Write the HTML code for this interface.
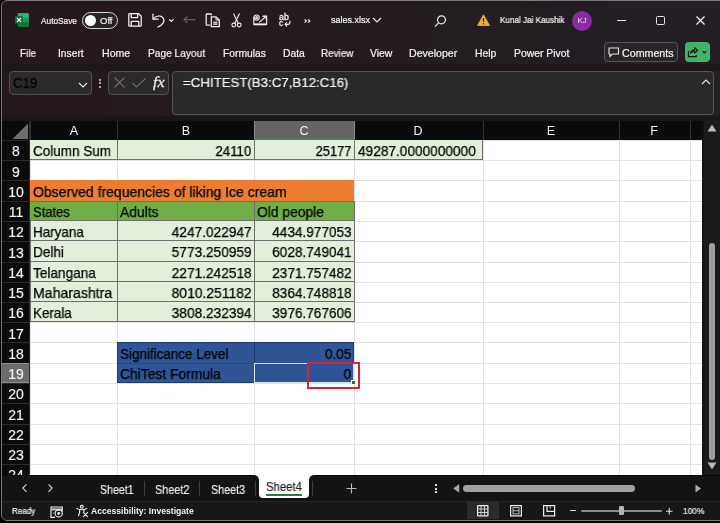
<!DOCTYPE html>
<html><head><meta charset="utf-8">
<style>
*{margin:0;padding:0;box-sizing:border-box}
html,body{width:720px;height:523px;overflow:hidden;background:#000;position:relative;font-family:"Liberation Sans",sans-serif}
.a{position:absolute}
.t{position:absolute;white-space:nowrap;line-height:1;will-change:transform}
svg{overflow:visible}
</style></head><body>

<div class="a" style="left:1px;top:0px;width:740px;height:520.8px;border:1.3px solid #7a7a7a;border-radius:6px;background:linear-gradient(90deg,#25181d 0%,#241b20 45%,#221f24 100%)"></div>
<svg class="a" style="left:14px;top:13px;" width="15" height="14" viewBox="0 0 15 14">
  <rect x="3.8" y="0.2" width="11" height="13.5" rx="1.2" fill="#1f9a5a"/>
  <rect x="3.8" y="0.2" width="11" height="4.5" rx="1" fill="#2fb474"/>
  <rect x="3.8" y="9.2" width="11" height="4.5" rx="1" fill="#13743f"/>
  <rect x="1" y="3" width="8" height="7.7" rx="1" fill="#0e6e38"/>
  <path d="M3 4.8 L7 9 M7 4.8 L3 9" stroke="#f4fff8" stroke-width="1.2"/></svg>
<div class="t" style="left:41px;top:16.77px;font-size:8.3px;color:#f0f0f0;font-weight:normal;font-family:'Liberation Sans';font-style:normal;transform:scaleX(1.0003);transform-origin:left top;-webkit-text-stroke:0.2px currentColor;">AutoSave</div>
<div class="a" style="left:82px;top:12px;width:36px;height:17px;border:1.3px solid #d8d8d8;border-radius:9px;background:#2a2326"></div>
<div class="a" style="left:85px;top:15px;width:11px;height:11px;border-radius:6px;background:#fff"></div>
<div class="t" style="left:100px;top:16.55px;font-size:8.8px;color:#f0f0f0;font-weight:normal;font-family:'Liberation Sans';font-style:normal;transform:scaleX(1.0798);transform-origin:left top;-webkit-text-stroke:0.2px currentColor;">Off</div>
<svg class="a" style="left:127.5px;top:13px;" width="14" height="14" viewBox="0 0 14 14"><g fill="none" stroke="#f2f2f2" stroke-width="1.25" stroke-linejoin="round"><path d="M0.8 1.5 Q0.8 0.7 1.6 0.7 H10.6 L13.2 3.3 V12.4 Q13.2 13.2 12.4 13.2 H1.6 Q0.8 13.2 0.8 12.4 Z"/><path d="M3.2 0.7 V4.6 H9.6 V0.7"/><path d="M3.2 13.2 V8.4 H10.8 V13.2"/></g></svg>
<svg class="a" style="left:151px;top:12.5px;" width="24" height="15" viewBox="0 0 24 15"><g fill="none" stroke="#f2f2f2" stroke-width="1.25" stroke-linecap="round" stroke-linejoin="round"><path d="M2 1 V6.2 H7.2"/><path d="M2.4 6 C4.6 2.4 10.4 1.8 12.4 5.4 C14 8.6 11.6 11.8 7 14"/><path d="M18.4 6.6 L20.3 8.4 L22.2 6.6" stroke-width="1.2"/></g></svg>
<svg class="a" style="left:182.5px;top:16px;" width="13" height="8" viewBox="0 0 13 8"><g fill="none" stroke="#6a6266" stroke-width="1.2"><path d="M12.5 3.7 H1"/><path d="M4.3 0.5 L1 3.7 L4.3 6.9"/></g></svg>
<svg class="a" style="left:205px;top:13px;" width="16" height="15" viewBox="0 0 16 15"><g fill="none" stroke="#ececec" stroke-width="1.3"><path d="M6.5 2.2 V1.6 Q6.5 1 5.9 1 H1.8 Q1.2 1 1.2 1.6 V11.5 Q1.2 12.1 1.8 12.1 H5"/><path d="M6.3 3.8 H11 L14.3 7 V13.6 H6.3 Z"/><path d="M11 3.8 V7 H14.3" stroke-width="1"/></g><rect x="8.2" y="8.6" width="4.2" height="3.2" fill="#ececec"/><path d="M8.2 10.2 H12.4" stroke="#241b20" stroke-width="0.6"/></svg>
<svg class="a" style="left:231px;top:13px;" width="11" height="15" viewBox="0 0 11 15"><g fill="none" stroke="#ececec" stroke-width="1.15"><path d="M2.5 0.6 L7.2 10.2"/><path d="M8.5 0.6 L3.8 10.2"/><circle cx="2.8" cy="12" r="1.9"/><circle cx="8.2" cy="12" r="1.9"/></g></svg>
<svg class="a" style="left:253px;top:14px;" width="15" height="12" viewBox="0 0 15 12"><g fill="none" stroke="#ececec" stroke-width="1.2"><path d="M0.8 3 V10.4 H13.6 V2.2 H9.5"/><path d="M0.8 10.4 H13.6" stroke-width="1.8"/><circle cx="3.6" cy="3.6" r="2.6"/><circle cx="3.6" cy="3.6" r="0.9"/><path d="M6.2 8.4 L12.6 2.8"/><path d="M9.8 2.4 H13 V5.6" stroke-width="1"/></g></svg>
<div class="t" style="left:278.8px;top:12.52px;font-size:8.6px;color:#f0f0f0;font-weight:normal;font-family:'Liberation Sans';font-style:normal;transform:scaleX(1.0245);transform-origin:left top;-webkit-text-stroke:0.3px currentColor;">ab</div>
<div class="t" style="left:279px;top:18.52px;font-size:8.6px;color:#f0f0f0;font-weight:normal;font-family:'Liberation Sans';font-style:normal;transform:scaleX(0.9302);transform-origin:left top;-webkit-text-stroke:0.3px currentColor;">c</div>
<svg class="a" style="left:283.5px;top:19.5px;" width="7" height="8" viewBox="0 0 7 8"><g fill="none" stroke="#f0f0f0" stroke-width="1.2" stroke-linejoin="round"><path d="M5.9 0.8 V2.6 Q5.9 4.4 4 4.4 H1.2"/><path d="M3 2.4 L1 4.4 L3 6.6"/></g></svg>
<svg class="a" style="left:303.5px;top:19px;" width="7" height="4" viewBox="0 0 7 4"><g fill="none" stroke="#ececec" stroke-width="1.2"><path d="M0.6 0.4 L2.4 2 L0.6 3.6"/><path d="M4 0.4 L5.8 2 L4 3.6"/></g></svg>
<div class="t" style="left:331px;top:16.18px;font-size:9px;color:#f4f4f4;font-weight:normal;font-family:'Liberation Sans';font-style:normal;transform:scaleX(0.9998);transform-origin:left top;-webkit-text-stroke:0.2px currentColor;">sales.xlsx</div>
<svg class="a" style="left:372px;top:17px;" width="10" height="7" viewBox="0 0 10 7"><path d="M1 1 L5 5 L9 1" fill="none" stroke="#e6e6e6" stroke-width="1.2"/></svg>
<svg class="a" style="left:434px;top:15px;" width="13" height="12" viewBox="0 0 13 12"><g fill="none" stroke="#e6e6e6" stroke-width="1.2"><circle cx="7.5" cy="4.8" r="4"/><path d="M4.6 7.8 L1 11.5"/></g></svg>
<svg class="a" style="left:477px;top:14px;" width="13" height="12" viewBox="0 0 13 12"><path d="M6.5 0.8 L12.5 11.5 H0.5 Z" fill="#f2a93b" stroke="#f2a93b" stroke-width="0.8" stroke-linejoin="round"/><path d="M6.5 4 V8" stroke="#3a2412" stroke-width="1.2"/><circle cx="6.5" cy="9.8" r="0.7" fill="#3a2412"/></svg>
<div class="t" style="left:499.5px;top:16.44px;font-size:8.7px;color:#f4f4f4;font-weight:normal;font-family:'Liberation Sans';font-style:normal;transform:scaleX(0.9326);transform-origin:left top;-webkit-text-stroke:0.2px currentColor;">Kunal Jai Kaushik</div>
<div class="a" style="left:572px;top:10.5px;width:20px;height:20px;border-radius:10px;background:#8a2aa5"></div>
<div class="t" style="left:382px;width:400px;text-align:center;top:16.90px;font-size:7.8px;color:#f0e4f2;font-weight:normal;font-family:'Liberation Sans';font-style:normal;">KJ</div>
<div class="a" style="left:617px;top:19.5px;width:9px;height:1.2px;background:#e6e6e6;"></div>
<div class="a" style="left:656px;top:16px;width:9px;height:9px;border:1.2px solid #e6e6e6;border-radius:1.5px"></div>
<svg class="a" style="left:696px;top:16px;" width="9" height="9" viewBox="0 0 9 9"><path d="M0.5 0.5 L8.5 8.5 M8.5 0.5 L0.5 8.5" stroke="#f0f0f0" stroke-width="1.2"/></svg>
<div class="t" style="left:20px;top:48.97px;font-size:10.2px;color:#f2f2f2;font-weight:normal;font-family:'Liberation Sans';font-style:normal;transform:scaleX(0.9735);transform-origin:left top;-webkit-text-stroke:0.2px currentColor;">File</div>
<div class="t" style="left:58.3px;top:48.97px;font-size:10.2px;color:#f2f2f2;font-weight:normal;font-family:'Liberation Sans';font-style:normal;transform:scaleX(1.0073);transform-origin:left top;-webkit-text-stroke:0.2px currentColor;">Insert</div>
<div class="t" style="left:101.7px;top:48.97px;font-size:10.2px;color:#f2f2f2;font-weight:normal;font-family:'Liberation Sans';font-style:normal;transform:scaleX(1.0401);transform-origin:left top;-webkit-text-stroke:0.2px currentColor;">Home</div>
<div class="t" style="left:147.8px;top:48.97px;font-size:10.2px;color:#f2f2f2;font-weight:normal;font-family:'Liberation Sans';font-style:normal;transform:scaleX(0.9968);transform-origin:left top;-webkit-text-stroke:0.2px currentColor;">Page Layout</div>
<div class="t" style="left:223.2px;top:48.97px;font-size:10.2px;color:#f2f2f2;font-weight:normal;font-family:'Liberation Sans';font-style:normal;transform:scaleX(1.0115);transform-origin:left top;-webkit-text-stroke:0.2px currentColor;">Formulas</div>
<div class="t" style="left:282.6px;top:48.97px;font-size:10.2px;color:#f2f2f2;font-weight:normal;font-family:'Liberation Sans';font-style:normal;transform:scaleX(1.0164);transform-origin:left top;-webkit-text-stroke:0.2px currentColor;">Data</div>
<div class="t" style="left:320.8px;top:48.97px;font-size:10.2px;color:#f2f2f2;font-weight:normal;font-family:'Liberation Sans';font-style:normal;transform:scaleX(0.9718);transform-origin:left top;-webkit-text-stroke:0.2px currentColor;">Review</div>
<div class="t" style="left:369.6px;top:48.97px;font-size:10.2px;color:#f2f2f2;font-weight:normal;font-family:'Liberation Sans';font-style:normal;transform:scaleX(1.0217);transform-origin:left top;-webkit-text-stroke:0.2px currentColor;">View</div>
<div class="t" style="left:409.2px;top:48.97px;font-size:10.2px;color:#f2f2f2;font-weight:normal;font-family:'Liberation Sans';font-style:normal;transform:scaleX(1.0388);transform-origin:left top;-webkit-text-stroke:0.2px currentColor;">Developer</div>
<div class="t" style="left:475px;top:48.97px;font-size:10.2px;color:#f2f2f2;font-weight:normal;font-family:'Liberation Sans';font-style:normal;transform:scaleX(1.0201);transform-origin:left top;-webkit-text-stroke:0.2px currentColor;">Help</div>
<div class="t" style="left:513.9px;top:48.97px;font-size:10.2px;color:#f2f2f2;font-weight:normal;font-family:'Liberation Sans';font-style:normal;transform:scaleX(1.0198);transform-origin:left top;-webkit-text-stroke:0.2px currentColor;">Power Pivot</div>
<div class="a" style="left:604px;top:42px;width:74px;height:20px;border:1px solid #5a5658;border-radius:4px;background:#2a2528"></div>
<svg class="a" style="left:608px;top:47px;" width="12" height="11" viewBox="0 0 12 11"><path d="M1 1 H10.5 V7 H4.5 L2 9.5 V7 H1 Z" fill="none" stroke="#e6e6e6" stroke-width="1.1"/></svg>
<div class="t" style="left:621.7px;top:47.71px;font-size:10.5px;color:#f4f4f4;font-weight:normal;font-family:'Liberation Sans';font-style:normal;transform:scaleX(1.0165);transform-origin:left top;-webkit-text-stroke:0.2px currentColor;">Comments</div>
<div class="a" style="left:684.5px;top:42px;width:25.5px;height:19.5px;border-radius:4px;background:#45b26a"></div>
<svg class="a" style="left:687px;top:46px;" width="22" height="12" viewBox="0 0 22 12"><g fill="none" stroke="#0a1a0e" stroke-width="1.2" stroke-linejoin="round"><path d="M1.5 5 V10.6 H9.2 V9"/><path d="M3.6 7 C4.2 4.6 5.8 3.9 7.6 3.9 V1.8 L10.6 4.4 L7.6 7 V5.5 C6 5.5 4.8 6 3.6 7 Z"/><path d="M15.6 5.2 L17.4 6.9 L19.2 5.2"/></g></svg>
<div class="a" style="left:2px;top:63.8px;width:718px;height:7px;background:#1d171a;"></div>
<div class="a" style="left:2px;top:116px;width:718px;height:5px;background:#1b1618;"></div>
<div class="a" style="left:9px;top:71px;width:83px;height:24px;border:1px solid #524f51;border-radius:4px;background:#2b292b"></div>
<div class="t" style="left:13.1px;top:76.62px;font-size:13.8px;color:#050505;font-weight:normal;font-family:'Liberation Sans';font-style:normal;transform:scaleX(0.9559);transform-origin:left top;-webkit-text-stroke:0.35px currentColor;">C19</div>
<svg class="a" style="left:78px;top:81.5px;" width="10" height="6" viewBox="0 0 10 6"><path d="M1 1 L5 5 L9 1" fill="none" stroke="#e6e6e6" stroke-width="1.15"/></svg>
<div class="a" style="left:99px;top:78.9px;width:2.2px;height:2.2px;background:#d8d8d8;border-radius:1px"></div>
<div class="a" style="left:99px;top:82.2px;width:2.2px;height:2.2px;background:#d8d8d8;border-radius:1px"></div>
<div class="a" style="left:99px;top:85.5px;width:2.2px;height:2.2px;background:#d8d8d8;border-radius:1px"></div>
<div class="a" style="left:108px;top:71px;width:61px;height:24px;border:1px solid #524f51;border-radius:4px;background:#2b292b"></div>
<svg class="a" style="left:114px;top:77px;" width="11" height="11" viewBox="0 0 11 11"><path d="M0.5 0.5 L10.5 10.5 M10.5 0.5 L0.5 10.5" stroke="#6f6a6d" stroke-width="1.1"/></svg>
<svg class="a" style="left:132px;top:78px;" width="14" height="10" viewBox="0 0 14 10"><path d="M0.5 5 L4.5 9 L13.5 0.5" fill="none" stroke="#6f6a6d" stroke-width="1.1"/></svg>
<div class="t" style="left:152.5px;top:75.23px;font-size:14.5px;color:#ececec;font-weight:normal;font-family:'Liberation Serif';font-style:italic;transform:scaleX(1.1083);transform-origin:left top;-webkit-text-stroke:0.3px currentColor;">fx</div>
<div class="a" style="left:172px;top:71px;width:542px;height:44px;border:1px solid #555555;border-radius:4px;background:#292929"></div>
<div class="t" style="left:182.5px;top:76.26px;font-size:13.4px;color:#f6f6f6;font-weight:normal;font-family:'Liberation Sans';font-style:normal;transform:scaleX(0.9899);transform-origin:left top;-webkit-text-stroke:0.2px currentColor;">=CHITEST(B3:C7,B12:C16)</div>
<svg class="a" style="left:701px;top:79px;" width="10" height="6" viewBox="0 0 10 6"><path d="M1 5 L5 1 L9 5" fill="none" stroke="#e0e0e0" stroke-width="1.2"/></svg>
<div class="a" style="left:2px;top:121px;width:700px;height:354px;background:#ffffff;"></div>
<div class="a" style="left:30px;top:140px;width:1px;height:335px;background:#e2e2e2;"></div>
<div class="a" style="left:117px;top:140px;width:1px;height:335px;background:#e2e2e2;"></div>
<div class="a" style="left:254px;top:140px;width:1px;height:335px;background:#e2e2e2;"></div>
<div class="a" style="left:354px;top:140px;width:1px;height:335px;background:#e2e2e2;"></div>
<div class="a" style="left:482.5px;top:140px;width:1px;height:335px;background:#e2e2e2;"></div>
<div class="a" style="left:618.5px;top:140px;width:1px;height:335px;background:#e2e2e2;"></div>
<div class="a" style="left:689.5px;top:140px;width:1px;height:335px;background:#e2e2e2;"></div>
<div class="a" style="left:30px;top:140px;width:672px;height:1px;background:#e2e2e2;"></div>
<div class="a" style="left:30px;top:160px;width:672px;height:1px;background:#e2e2e2;"></div>
<div class="a" style="left:30px;top:180px;width:672px;height:1px;background:#e2e2e2;"></div>
<div class="a" style="left:30px;top:201px;width:672px;height:1px;background:#e2e2e2;"></div>
<div class="a" style="left:30px;top:221px;width:672px;height:1px;background:#e2e2e2;"></div>
<div class="a" style="left:30px;top:241px;width:672px;height:1px;background:#e2e2e2;"></div>
<div class="a" style="left:30px;top:262px;width:672px;height:1px;background:#e2e2e2;"></div>
<div class="a" style="left:30px;top:282px;width:672px;height:1px;background:#e2e2e2;"></div>
<div class="a" style="left:30px;top:302px;width:672px;height:1px;background:#e2e2e2;"></div>
<div class="a" style="left:30px;top:322px;width:672px;height:1px;background:#e2e2e2;"></div>
<div class="a" style="left:30px;top:342px;width:672px;height:1px;background:#e2e2e2;"></div>
<div class="a" style="left:30px;top:363px;width:672px;height:1px;background:#e2e2e2;"></div>
<div class="a" style="left:30px;top:383px;width:672px;height:1px;background:#e2e2e2;"></div>
<div class="a" style="left:30px;top:403px;width:672px;height:1px;background:#e2e2e2;"></div>
<div class="a" style="left:30px;top:424px;width:672px;height:1px;background:#e2e2e2;"></div>
<div class="a" style="left:30px;top:444px;width:672px;height:1px;background:#e2e2e2;"></div>
<div class="a" style="left:30px;top:464px;width:672px;height:1px;background:#e2e2e2;"></div>
<div class="a" style="left:2px;top:121px;width:700px;height:19px;background:#0b0b0b;"></div>
<svg class="a" style="left:12px;top:122.5px;" width="17" height="16.5" viewBox="0 0 17 16.5"><path d="M16 0.5 V16 H0.5 Z" fill="#6d6d6d"/></svg>
<div class="a" style="left:30px;top:121px;width:1px;height:19px;background:#333333;"></div>
<div class="t" style="left:-126.5px;width:400px;text-align:center;top:125.22px;font-size:12.5px;color:#f4f4f4;font-weight:normal;font-family:'Liberation Sans';font-style:normal;">A</div>
<div class="a" style="left:117px;top:121px;width:1px;height:19px;background:#333333;"></div>
<div class="t" style="left:-14.5px;width:400px;text-align:center;top:125.22px;font-size:12.5px;color:#f4f4f4;font-weight:normal;font-family:'Liberation Sans';font-style:normal;">B</div>
<div class="a" style="left:254px;top:121px;width:100px;height:19px;background:#646464;"></div>
<div class="a" style="left:254px;top:138.3px;width:100px;height:2px;background:#4f7a5e;"></div>
<div class="a" style="left:254px;top:121px;width:1px;height:19px;background:#8a8a8a;"></div>
<div class="t" style="left:104.0px;width:400px;text-align:center;top:125.22px;font-size:12.5px;color:#f4f4f4;font-weight:normal;font-family:'Liberation Sans';font-style:normal;">C</div>
<div class="a" style="left:354px;top:121px;width:1px;height:19px;background:#8a8a8a;"></div>
<div class="t" style="left:218.25px;width:400px;text-align:center;top:125.22px;font-size:12.5px;color:#f4f4f4;font-weight:normal;font-family:'Liberation Sans';font-style:normal;">D</div>
<div class="a" style="left:482.5px;top:121px;width:1px;height:19px;background:#333333;"></div>
<div class="t" style="left:350.5px;width:400px;text-align:center;top:125.22px;font-size:12.5px;color:#f4f4f4;font-weight:normal;font-family:'Liberation Sans';font-style:normal;">E</div>
<div class="a" style="left:618.5px;top:121px;width:1px;height:19px;background:#333333;"></div>
<div class="t" style="left:454.0px;width:400px;text-align:center;top:125.22px;font-size:12.5px;color:#f4f4f4;font-weight:normal;font-family:'Liberation Sans';font-style:normal;">F</div>
<div class="a" style="left:689.5px;top:121px;width:1px;height:19px;background:#333333;"></div>
<div class="a" style="left:2px;top:140px;width:28px;height:335px;background:#0b0b0b;"></div>
<div class="a" style="left:2px;top:140px;width:28px;height:1px;background:#2c2c2c;"></div>
<div class="t" style="left:-184px;width:400px;text-align:center;top:144.35px;font-size:14px;color:#f4f4f4;font-weight:normal;font-family:'Liberation Sans';font-style:normal;-webkit-text-stroke:0.15px currentColor;">8</div>
<div class="a" style="left:2px;top:160px;width:28px;height:1px;background:#2c2c2c;"></div>
<div class="t" style="left:-184px;width:400px;text-align:center;top:164.60px;font-size:14px;color:#f4f4f4;font-weight:normal;font-family:'Liberation Sans';font-style:normal;-webkit-text-stroke:0.15px currentColor;">9</div>
<div class="a" style="left:2px;top:180px;width:28px;height:1px;background:#2c2c2c;"></div>
<div class="t" style="left:-184px;width:400px;text-align:center;top:184.85px;font-size:14px;color:#f4f4f4;font-weight:normal;font-family:'Liberation Sans';font-style:normal;-webkit-text-stroke:0.15px currentColor;">10</div>
<div class="a" style="left:2px;top:201px;width:28px;height:1px;background:#2c2c2c;"></div>
<div class="t" style="left:-184px;width:400px;text-align:center;top:205.10px;font-size:14px;color:#f4f4f4;font-weight:normal;font-family:'Liberation Sans';font-style:normal;-webkit-text-stroke:0.15px currentColor;">11</div>
<div class="a" style="left:2px;top:221px;width:28px;height:1px;background:#2c2c2c;"></div>
<div class="t" style="left:-184px;width:400px;text-align:center;top:225.35px;font-size:14px;color:#f4f4f4;font-weight:normal;font-family:'Liberation Sans';font-style:normal;-webkit-text-stroke:0.15px currentColor;">12</div>
<div class="a" style="left:2px;top:241px;width:28px;height:1px;background:#2c2c2c;"></div>
<div class="t" style="left:-184px;width:400px;text-align:center;top:245.60px;font-size:14px;color:#f4f4f4;font-weight:normal;font-family:'Liberation Sans';font-style:normal;-webkit-text-stroke:0.15px currentColor;">13</div>
<div class="a" style="left:2px;top:262px;width:28px;height:1px;background:#2c2c2c;"></div>
<div class="t" style="left:-184px;width:400px;text-align:center;top:265.85px;font-size:14px;color:#f4f4f4;font-weight:normal;font-family:'Liberation Sans';font-style:normal;-webkit-text-stroke:0.15px currentColor;">14</div>
<div class="a" style="left:2px;top:282px;width:28px;height:1px;background:#2c2c2c;"></div>
<div class="t" style="left:-184px;width:400px;text-align:center;top:286.10px;font-size:14px;color:#f4f4f4;font-weight:normal;font-family:'Liberation Sans';font-style:normal;-webkit-text-stroke:0.15px currentColor;">15</div>
<div class="a" style="left:2px;top:302px;width:28px;height:1px;background:#2c2c2c;"></div>
<div class="t" style="left:-184px;width:400px;text-align:center;top:306.35px;font-size:14px;color:#f4f4f4;font-weight:normal;font-family:'Liberation Sans';font-style:normal;-webkit-text-stroke:0.15px currentColor;">16</div>
<div class="a" style="left:2px;top:322px;width:28px;height:1px;background:#2c2c2c;"></div>
<div class="t" style="left:-184px;width:400px;text-align:center;top:326.60px;font-size:14px;color:#f4f4f4;font-weight:normal;font-family:'Liberation Sans';font-style:normal;-webkit-text-stroke:0.15px currentColor;">17</div>
<div class="a" style="left:2px;top:342px;width:28px;height:1px;background:#2c2c2c;"></div>
<div class="t" style="left:-184px;width:400px;text-align:center;top:346.85px;font-size:14px;color:#f4f4f4;font-weight:normal;font-family:'Liberation Sans';font-style:normal;-webkit-text-stroke:0.15px currentColor;">18</div>
<div class="a" style="left:2px;top:363px;width:28px;height:20px;background:#6b6b6b;"></div>
<div class="a" style="left:28.8px;top:363px;width:1.2px;height:20px;background:#3f7f57;"></div>
<div class="a" style="left:2px;top:382px;width:28px;height:1px;background:#8f8f8f;"></div>
<div class="a" style="left:2px;top:363px;width:28px;height:1px;background:#8f8f8f;"></div>
<div class="t" style="left:-184px;width:400px;text-align:center;top:367.10px;font-size:14px;color:#f4f4f4;font-weight:normal;font-family:'Liberation Sans';font-style:normal;-webkit-text-stroke:0.15px currentColor;">19</div>
<div class="a" style="left:2px;top:383px;width:28px;height:1px;background:#2c2c2c;"></div>
<div class="t" style="left:-184px;width:400px;text-align:center;top:387.35px;font-size:14px;color:#f4f4f4;font-weight:normal;font-family:'Liberation Sans';font-style:normal;-webkit-text-stroke:0.15px currentColor;">20</div>
<div class="a" style="left:2px;top:403px;width:28px;height:1px;background:#2c2c2c;"></div>
<div class="t" style="left:-184px;width:400px;text-align:center;top:407.60px;font-size:14px;color:#f4f4f4;font-weight:normal;font-family:'Liberation Sans';font-style:normal;-webkit-text-stroke:0.15px currentColor;">21</div>
<div class="a" style="left:2px;top:424px;width:28px;height:1px;background:#2c2c2c;"></div>
<div class="t" style="left:-184px;width:400px;text-align:center;top:427.85px;font-size:14px;color:#f4f4f4;font-weight:normal;font-family:'Liberation Sans';font-style:normal;-webkit-text-stroke:0.15px currentColor;">22</div>
<div class="a" style="left:2px;top:444px;width:28px;height:1px;background:#2c2c2c;"></div>
<div class="t" style="left:-184px;width:400px;text-align:center;top:448.10px;font-size:14px;color:#f4f4f4;font-weight:normal;font-family:'Liberation Sans';font-style:normal;-webkit-text-stroke:0.15px currentColor;">23</div>
<div class="a" style="left:2px;top:464px;width:28px;height:1px;background:#2c2c2c;"></div>
<div class="t" style="left:-184px;width:400px;text-align:center;top:468.35px;font-size:14px;color:#f4f4f4;font-weight:normal;font-family:'Liberation Sans';font-style:normal;-webkit-text-stroke:0.15px currentColor;">24</div>
<div class="a" style="left:29px;top:121px;width:1px;height:354px;background:#2a2a2a;"></div>
<div class="a" style="left:30px;top:140px;width:452.5px;height:20px;background:#e2efda;"></div>
<div class="a" style="left:30px;top:180px;width:324px;height:21px;background:#ed7d31;"></div>
<div class="a" style="left:30px;top:201px;width:324px;height:20px;background:#70ad47;"></div>
<div class="a" style="left:30px;top:221px;width:324px;height:101px;background:#e2efda;"></div>
<div class="a" style="left:117px;top:342px;width:237px;height:41px;background:#2f5597;"></div>
<div class="a" style="left:30px;top:159px;width:452.5px;height:1px;background:#6e6e6e;"></div>
<div class="a" style="left:116.5px;top:140px;width:1px;height:20px;background:#6e6e6e;"></div>
<div class="a" style="left:253.5px;top:140px;width:1px;height:20px;background:#6e6e6e;"></div>
<div class="a" style="left:353.5px;top:140px;width:1px;height:20px;background:#6e6e6e;"></div>
<div class="a" style="left:481.5px;top:140px;width:1px;height:20px;background:#6e6e6e;"></div>
<div class="a" style="left:30px;top:201px;width:324px;height:1px;background:#6e6e6e;"></div>
<div class="a" style="left:30px;top:220px;width:324px;height:1px;background:#6e6e6e;"></div>
<div class="a" style="left:30px;top:240px;width:324px;height:1px;background:#6e6e6e;"></div>
<div class="a" style="left:30px;top:261px;width:324px;height:1px;background:#6e6e6e;"></div>
<div class="a" style="left:30px;top:281px;width:324px;height:1px;background:#6e6e6e;"></div>
<div class="a" style="left:30px;top:301px;width:324px;height:1px;background:#6e6e6e;"></div>
<div class="a" style="left:30px;top:321px;width:324px;height:1px;background:#6e6e6e;"></div>
<div class="a" style="left:116.5px;top:201px;width:1px;height:121px;background:#6e6e6e;"></div>
<div class="a" style="left:253.5px;top:201px;width:1px;height:121px;background:#6e6e6e;"></div>
<div class="a" style="left:353.5px;top:201px;width:1px;height:121px;background:#6e6e6e;"></div>
<div class="a" style="left:30px;top:221px;width:1px;height:101px;background:#6e6e6e;"></div>
<div class="a" style="left:117px;top:342px;width:237px;height:1px;background:#1f3b6a;"></div>
<div class="a" style="left:117px;top:362.5px;width:237px;height:1px;background:#24467f;"></div>
<div class="a" style="left:117px;top:382px;width:237px;height:1px;background:#1f3b6a;"></div>
<div class="a" style="left:117px;top:342px;width:1px;height:41px;background:#1f3b6a;"></div>
<div class="a" style="left:254px;top:342px;width:1px;height:41px;background:#1f3b6a;"></div>
<div class="a" style="left:353px;top:342px;width:1px;height:41px;background:#1f3b6a;"></div>
<div class="t" style="left:33px;top:144.03px;font-size:14.5px;color:#000;font-weight:normal;font-family:'Liberation Sans';font-style:normal;transform:scaleX(0.9307);transform-origin:left top;-webkit-text-stroke:0.25px currentColor;">Column Sum</div>
<div class="t" style="right:468.6px;top:144.03px;font-size:14.5px;color:#000;font-weight:normal;font-family:'Liberation Sans';font-style:normal;transform:scaleX(0.9122);transform-origin:right top;-webkit-text-stroke:0.25px currentColor;">24110</div>
<div class="t" style="right:368.6px;top:144.03px;font-size:14.5px;color:#000;font-weight:normal;font-family:'Liberation Sans';font-style:normal;transform:scaleX(0.8854);transform-origin:right top;-webkit-text-stroke:0.25px currentColor;">25177</div>
<div class="t" style="left:357.6px;top:144.03px;font-size:14.5px;color:#000;font-weight:normal;font-family:'Liberation Sans';font-style:normal;transform:scaleX(0.9425);transform-origin:left top;-webkit-text-stroke:0.25px currentColor;">49287.0000000000</div>
<div class="t" style="left:33px;top:185.03px;font-size:14.5px;color:#000;font-weight:normal;font-family:'Liberation Sans';font-style:normal;transform:scaleX(0.9653);transform-origin:left top;-webkit-text-stroke:0.25px currentColor;">Observed frequencies of liking Ice cream</div>
<div class="t" style="left:33px;top:205.03px;font-size:14.5px;color:#000;font-weight:normal;font-family:'Liberation Sans';font-style:normal;transform:scaleX(0.8952);transform-origin:left top;-webkit-text-stroke:0.25px currentColor;">States</div>
<div class="t" style="left:120px;top:205.03px;font-size:14.5px;color:#000;font-weight:normal;font-family:'Liberation Sans';font-style:normal;transform:scaleX(0.9553);transform-origin:left top;-webkit-text-stroke:0.25px currentColor;">Adults</div>
<div class="t" style="left:257px;top:205.03px;font-size:14.5px;color:#000;font-weight:normal;font-family:'Liberation Sans';font-style:normal;transform:scaleX(0.9553);transform-origin:left top;-webkit-text-stroke:0.25px currentColor;">Old people</div>
<div class="t" style="left:33px;top:225.03px;font-size:14.5px;color:#000;font-weight:normal;font-family:'Liberation Sans';font-style:normal;transform:scaleX(0.9269);transform-origin:left top;-webkit-text-stroke:0.25px currentColor;">Haryana</div>
<div class="t" style="right:468.6px;top:225.03px;font-size:14.5px;color:#000;font-weight:normal;font-family:'Liberation Sans';font-style:normal;transform:scaleX(0.9449);transform-origin:right top;-webkit-text-stroke:0.25px currentColor;">4247.022947</div>
<div class="t" style="right:368.6px;top:225.03px;font-size:14.5px;color:#000;font-weight:normal;font-family:'Liberation Sans';font-style:normal;transform:scaleX(0.9390);transform-origin:right top;-webkit-text-stroke:0.25px currentColor;">4434.977053</div>
<div class="t" style="left:33px;top:245.03px;font-size:14.5px;color:#000;font-weight:normal;font-family:'Liberation Sans';font-style:normal;transform:scaleX(0.9382);transform-origin:left top;-webkit-text-stroke:0.25px currentColor;">Delhi</div>
<div class="t" style="right:468.6px;top:245.03px;font-size:14.5px;color:#000;font-weight:normal;font-family:'Liberation Sans';font-style:normal;transform:scaleX(0.9449);transform-origin:right top;-webkit-text-stroke:0.25px currentColor;">5773.250959</div>
<div class="t" style="right:368.6px;top:245.03px;font-size:14.5px;color:#000;font-weight:normal;font-family:'Liberation Sans';font-style:normal;transform:scaleX(0.9390);transform-origin:right top;-webkit-text-stroke:0.25px currentColor;">6028.749041</div>
<div class="t" style="left:33px;top:266.03px;font-size:14.5px;color:#000;font-weight:normal;font-family:'Liberation Sans';font-style:normal;transform:scaleX(0.9399);transform-origin:left top;-webkit-text-stroke:0.25px currentColor;">Telangana</div>
<div class="t" style="right:468.6px;top:266.03px;font-size:14.5px;color:#000;font-weight:normal;font-family:'Liberation Sans';font-style:normal;transform:scaleX(0.9449);transform-origin:right top;-webkit-text-stroke:0.25px currentColor;">2271.242518</div>
<div class="t" style="right:368.6px;top:266.03px;font-size:14.5px;color:#000;font-weight:normal;font-family:'Liberation Sans';font-style:normal;transform:scaleX(0.9390);transform-origin:right top;-webkit-text-stroke:0.25px currentColor;">2371.757482</div>
<div class="t" style="left:33px;top:286.03px;font-size:14.5px;color:#000;font-weight:normal;font-family:'Liberation Sans';font-style:normal;transform:scaleX(0.9730);transform-origin:left top;-webkit-text-stroke:0.25px currentColor;">Maharashtra</div>
<div class="t" style="right:468.6px;top:286.03px;font-size:14.5px;color:#000;font-weight:normal;font-family:'Liberation Sans';font-style:normal;transform:scaleX(0.9570);transform-origin:right top;-webkit-text-stroke:0.25px currentColor;">8010.251182</div>
<div class="t" style="right:368.6px;top:286.03px;font-size:14.5px;color:#000;font-weight:normal;font-family:'Liberation Sans';font-style:normal;transform:scaleX(0.9390);transform-origin:right top;-webkit-text-stroke:0.25px currentColor;">8364.748818</div>
<div class="t" style="left:33px;top:306.03px;font-size:14.5px;color:#000;font-weight:normal;font-family:'Liberation Sans';font-style:normal;transform:scaleX(0.9233);transform-origin:left top;-webkit-text-stroke:0.25px currentColor;">Kerala</div>
<div class="t" style="right:468.6px;top:306.03px;font-size:14.5px;color:#000;font-weight:normal;font-family:'Liberation Sans';font-style:normal;transform:scaleX(0.9449);transform-origin:right top;-webkit-text-stroke:0.25px currentColor;">3808.232394</div>
<div class="t" style="right:368.6px;top:306.03px;font-size:14.5px;color:#000;font-weight:normal;font-family:'Liberation Sans';font-style:normal;transform:scaleX(0.9390);transform-origin:right top;-webkit-text-stroke:0.25px currentColor;">3976.767606</div>
<div class="t" style="left:120px;top:347.03px;font-size:14.5px;color:#000;font-weight:normal;font-family:'Liberation Sans';font-style:normal;transform:scaleX(0.9275);transform-origin:left top;-webkit-text-stroke:0.25px currentColor;">Significance Level</div>
<div class="t" style="right:368.6px;top:347.03px;font-size:14.5px;color:#000;font-weight:normal;font-family:'Liberation Sans';font-style:normal;transform:scaleX(0.9310);transform-origin:right top;-webkit-text-stroke:0.25px currentColor;">0.05</div>
<div class="t" style="left:120px;top:367.03px;font-size:14.5px;color:#000;font-weight:normal;font-family:'Liberation Sans';font-style:normal;transform:scaleX(0.9540);transform-origin:left top;-webkit-text-stroke:0.25px currentColor;">ChiTest Formula</div>
<div class="t" style="right:368.6px;top:367.03px;font-size:14.5px;color:#000;font-weight:normal;font-family:'Liberation Sans';font-style:normal;transform:scaleX(0.9310);transform-origin:right top;-webkit-text-stroke:0.25px currentColor;">0</div>
<div class="a" style="left:254px;top:363px;width:100px;height:20px;border:1.5px solid #cfe6da"></div>
<div class="a" style="left:350.5px;top:379.5px;width:5px;height:5px;background:#217346;border:1px solid #fff"></div>
<div class="a" style="left:307px;top:362px;width:53px;height:27px;border:2.5px solid #d42530"></div>
<div class="a" style="left:702px;top:121px;width:18px;height:354px;background:#1a1a1a;"></div>
<div class="a" style="left:702px;top:121px;width:2px;height:354px;background:#121212;"></div>
<svg class="a" style="left:707px;top:124px;" width="10" height="8" viewBox="0 0 10 8"><path d="M5 0.5 L9.5 7.5 H0.5 Z" fill="#b8b8b8"/></svg>
<div class="a" style="left:709px;top:243px;width:6px;height:217px;background:#9f9f9f;border-radius:3px"></div>
<svg class="a" style="left:707px;top:462px;" width="10" height="8" viewBox="0 0 10 8"><path d="M0.5 0.5 H9.5 L5 7.5 Z" fill="#b8b8b8"/></svg>
<div class="a" style="left:2px;top:475px;width:718px;height:26px;background:#131215;border-top:1.5px solid #050505"></div>
<svg class="a" style="left:21.5px;top:483.8px;" width="5" height="8.2" viewBox="0 0 5 8.2"><path d="M4.5 0.3 L0.8 4.1 L4.5 7.9" fill="none" stroke="#d6d6d6" stroke-width="1.1"/></svg>
<svg class="a" style="left:48.2px;top:483.8px;" width="5" height="8.2" viewBox="0 0 5 8.2"><path d="M0.5 0.3 L4.2 4.1 L0.5 7.9" fill="none" stroke="#d6d6d6" stroke-width="1.1"/></svg>
<div class="t" style="left:99.8px;top:483.54px;font-size:12px;color:#f0f0f0;font-weight:normal;font-family:'Liberation Sans';font-style:normal;transform:scaleX(0.8861);transform-origin:left top;-webkit-text-stroke:0.15px currentColor;">Sheet1</div>
<div class="t" style="left:154.7px;top:483.54px;font-size:12px;color:#f0f0f0;font-weight:normal;font-family:'Liberation Sans';font-style:normal;transform:scaleX(0.9071);transform-origin:left top;-webkit-text-stroke:0.15px currentColor;">Sheet2</div>
<div class="t" style="left:210.8px;top:483.54px;font-size:12px;color:#f0f0f0;font-weight:normal;font-family:'Liberation Sans';font-style:normal;transform:scaleX(0.8992);transform-origin:left top;-webkit-text-stroke:0.15px currentColor;">Sheet3</div>
<div class="a" style="left:143.5px;top:481px;width:1.2px;height:14.5px;background:#3c3c3e;"></div>
<div class="a" style="left:199px;top:481px;width:1.2px;height:14.5px;background:#3c3c3e;"></div>
<div class="a" style="left:255.3px;top:481px;width:1.2px;height:14.5px;background:#3c3c3e;"></div>
<div class="a" style="left:312.2px;top:481px;width:1.2px;height:14.5px;background:#3c3c3e;"></div>
<div class="a" style="left:259.2px;top:470px;width:50.1px;height:28.2px;background:#fff;border-radius:0 0 4px 4px"></div>
<div class="a" style="left:252px;top:475px;width:7.2px;height:6px;background:#fff"></div><div class="a" style="left:252px;top:475px;width:7.2px;height:6px;background:#131215;border-top-right-radius:5px"></div>
<div class="a" style="left:309.3px;top:475px;width:7px;height:6px;background:#fff"></div><div class="a" style="left:309.3px;top:475px;width:7px;height:6px;background:#131215;border-top-left-radius:5px"></div>
<div class="t" style="left:266px;top:480.84px;font-size:12px;color:#1a1a1a;font-weight:normal;font-family:'Liberation Sans';font-style:normal;transform:scaleX(0.9466);transform-origin:left top;-webkit-text-stroke:0.15px currentColor;">Sheet4</div>
<div class="a" style="left:266px;top:494.4px;width:36px;height:1.6px;background:#2b7a4b;"></div>
<svg class="a" style="left:346px;top:483px;" width="11" height="11" viewBox="0 0 11 11"><path d="M5.5 0.5 V10.5 M0.5 5.5 H10.5" stroke="#bdbdbd" stroke-width="1.1"/></svg>
<div class="a" style="left:434.8px;top:484.2px;width:2px;height:2px;background:#f0f0f0;border-radius:0.5px"></div>
<div class="a" style="left:434.8px;top:487.6px;width:2px;height:2px;background:#f0f0f0;border-radius:0.5px"></div>
<div class="a" style="left:434.8px;top:491px;width:2px;height:2px;background:#f0f0f0;border-radius:0.5px"></div>
<svg class="a" style="left:453px;top:483.5px;" width="7" height="9" viewBox="0 0 7 9"><path d="M6 0.5 V8.3 L0.5 4.4 Z" fill="#a8a8a8" stroke="#a8a8a8" stroke-width="0.5" stroke-linejoin="round"/></svg>
<div class="a" style="left:463.3px;top:484.8px;width:171.5px;height:6.8px;background:#a0a0a0;border-radius:3.4px"></div>
<svg class="a" style="left:695px;top:484px;" width="7" height="9" viewBox="0 0 7 9"><path d="M0.5 0.5 V8.5 L6 4.5 Z" fill="#a8a8a8"/></svg>
<div class="a" style="left:2px;top:501px;width:718px;height:18.6px;background:#171718;border-radius:0 0 0 5px;border-top:1px solid #262628"></div>
<div class="t" style="left:11.5px;top:507.27px;font-size:8.3px;color:#ececec;font-weight:normal;font-family:'Liberation Sans';font-style:normal;transform:scaleX(0.9712);transform-origin:left top;-webkit-text-stroke:0.2px currentColor;">Ready</div>
<svg class="a" style="left:49.5px;top:505.5px;" width="13.5" height="12.5" viewBox="0 0 13.5 12.5"><g fill="none" stroke="#f0f0f0" stroke-width="1.15"><path d="M5 11.3 H1 V1 H12.3 V5.5"/><path d="M1 3.4 H12.3" stroke-width="2.2" stroke="#bdbdbd"/><circle cx="8.7" cy="7.4" r="3.6"/></g><circle cx="8.7" cy="7.4" r="1.4" fill="#f4f4f4"/><circle cx="3.5" cy="7" r="0.6" fill="#cfcfcf"/></svg>
<svg class="a" style="left:75.5px;top:505px;" width="13" height="13" viewBox="0 0 13 13"><g fill="none" stroke="#f0f0f0" stroke-width="1.1" stroke-linejoin="round" stroke-linecap="round"><circle cx="5.8" cy="1.8" r="1.4"/><path d="M0.8 3.4 C2.5 4.6 3.6 4.8 5.8 4.8 C8 4.8 9.1 4.6 10.8 3.4"/><path d="M3.6 4.7 V7.5 L2.5 10.8"/><path d="M8 4.7 V6.6"/><path d="M7.3 7.4 L11.6 11.6 M11.6 7.4 L7.3 11.6"/></g></svg>
<div class="t" style="left:90.8px;top:507.42px;font-size:8.6px;color:#f2f2f2;font-weight:bold;font-family:'Liberation Sans';font-style:normal;transform:scaleX(1.0004);transform-origin:left top;">Accessibility: Investigate</div>
<div class="a" style="left:466.7px;top:502px;width:32.5px;height:17px;background:#2a2a2a;"></div>
<svg class="a" style="left:477px;top:505px;" width="11.5" height="11.5" viewBox="0 0 11.5 11.5"><g fill="none" stroke="#f0f0f0" stroke-width="1.2"><rect x="0.6" y="0.6" width="10.3" height="10.3" rx="0.5"/><path d="M4 0.6 V10.9 M7.5 0.6 V10.9 M0.6 4 H10.9 M0.6 7.5 H10.9" stroke="#cfcfcf" stroke-width="1"/></g></svg>
<svg class="a" style="left:510px;top:505px;" width="12" height="11.5" viewBox="0 0 12 11.5"><g fill="none" stroke="#f0f0f0" stroke-width="1.2"><rect x="0.6" y="0.6" width="10.8" height="10.3"/><rect x="3" y="2.6" width="6" height="6.3" stroke-width="0.9" stroke="#cfcfcf"/><path d="M3 5.7 H9" stroke-width="0.9" stroke="#cfcfcf"/></g></svg>
<svg class="a" style="left:543px;top:505px;" width="12.5" height="11.5" viewBox="0 0 12.5 11.5"><g fill="none" stroke="#f0f0f0" stroke-width="1.2"><rect x="0.6" y="0.6" width="11" height="10.3"/><path d="M4 0.6 V6.3 H11.6"/><path d="M7.2 0.6 V3.5" stroke-width="1" stroke="#cfcfcf"/></g></svg>
<div class="a" style="left:569.5px;top:510px;width:6px;height:1px;background:#d8d8d8;"></div>
<div class="a" style="left:580.5px;top:510px;width:81.5px;height:1.8px;background:#8c8c8c;border-radius:1px"></div>
<div class="a" style="left:619px;top:505.8px;width:5.2px;height:9.5px;background:#b4b4b4;border-radius:1px"></div>
<svg class="a" style="left:666px;top:507.5px;" width="6.5" height="6.5" viewBox="0 0 6.5 6.5"><path d="M3.25 0 V6.5 M0 3.25 H6.5" stroke="#e0e0e0" stroke-width="1.1"/></svg>
<div class="t" style="left:683.3px;top:507.05px;font-size:8.8px;color:#ececec;font-weight:normal;font-family:'Liberation Sans';font-style:normal;transform:scaleX(0.9464);transform-origin:left top;-webkit-text-stroke:0.2px currentColor;">100%</div>
</body></html>
